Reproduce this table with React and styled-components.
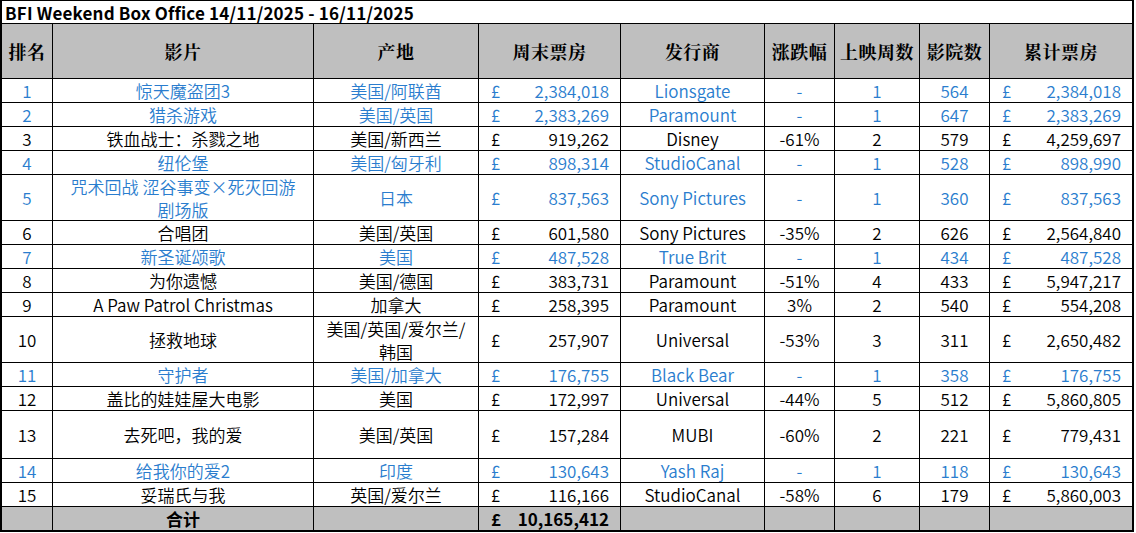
import React from "react";
import styled, { createGlobalStyle } from "styled-components";

const GlobalStyle = createGlobalStyle`
  html, body { margin: 0; padding: 0; background: #ffffff; }
  body { font-family: "Noto Sans CJK SC", "Noto Sans", sans-serif; }
`;

const COLS = "51px 261px 165px 142px 144px 70px 85px 70px 143px";
const BLUE = "#2A7DCE";
const GREY = "#BFBFBF";

const Sheet = styled.div`
  width: 1134px;
  box-sizing: border-box;
  border-top: 1px solid #000;
  border-left: 2px solid #000;
  border-right: 1px solid #000;
  border-bottom: 1px solid #000;
  font-family: "Noto Sans CJK SC", "Noto Sans", sans-serif;
`;

const TitleRow = styled.div`
  height: 23px;
  box-sizing: border-box;
  border-right: 1px solid #000;
  border-bottom: 1px solid #000;
  display: flex;
  align-items: center;
  padding-left: 3px;
  font-size: 17px;
  font-weight: 700;
  color: #000;
  white-space: nowrap;
  letter-spacing: 0.18px;
`;

const Row = styled.div`
  display: grid;
  grid-template-columns: ${COLS};
  height: ${(p) => p.$h}px;
  background: ${(p) => (p.$grey ? GREY : "#fff")};
  color: ${(p) => (p.$blue ? BLUE : "#000")};
`;

const Cell = styled.div`
  box-sizing: border-box;
  border-right: 1px solid #000;
  border-bottom: 1px solid #000;
  display: flex;
  align-items: center;
  justify-content: center;
  text-align: center;
  font-size: ${(p) => (p.$head ? 18 : 17)}px;
  font-weight: ${(p) => (p.$bold ? 700 : 350)};
  line-height: 23px;
  white-space: nowrap;
  overflow: hidden;
`;

const HeadCell = styled(Cell).attrs({ $head: true, $bold: true })`
  font-family: "Noto Serif CJK SC", "Noto Sans CJK SC", serif;
  letter-spacing: 0.5px;
`;

const MoneyCell = styled(Cell)`
  justify-content: space-between;
  padding: 0 11px 0 12px;
`;

const Pound = styled.span``;

const Amount = styled.span``;

const rows = [
  [1, "惊天魔盗团3", "美国/阿联酋", "2,384,018", "Lionsgate", "-", "1", "564", "2,384,018", true, 24],
  [2, "猎杀游戏", "美国/英国", "2,383,269", "Paramount", "-", "1", "647", "2,383,269", true, 24],
  [3, "铁血战士：杀戮之地", "美国/新西兰", "919,262", "Disney", "-61%", "2", "579", "4,259,697", false, 24],
  [4, "纽伦堡", "美国/匈牙利", "898,314", "StudioCanal", "-", "1", "528", "898,990", true, 24],
  [5, ["咒术回战 涩谷事变×死灭回游", "剧场版"], "日本", "837,563", "Sony Pictures", "-", "1", "360", "837,563", true, 46],
  [6, "合唱团", "美国/英国", "601,580", "Sony Pictures", "-35%", "2", "626", "2,564,840", false, 24],
  [7, "新圣诞颂歌", "美国", "487,528", "True Brit", "-", "1", "434", "487,528", true, 24],
  [8, "为你遗憾", "美国/德国", "383,731", "Paramount", "-51%", "4", "433", "5,947,217", false, 24],
  [9, "A Paw Patrol Christmas", "加拿大", "258,395", "Paramount", "3%", "2", "540", "554,208", false, 24],
  [10, "拯救地球", ["美国/英国/爱尔兰/", "韩国"], "257,907", "Universal", "-53%", "3", "311", "2,650,482", false, 46],
  [11, "守护者", "美国/加拿大", "176,755", "Black Bear", "-", "1", "358", "176,755", true, 24],
  [12, "盖比的娃娃屋大电影", "美国", "172,997", "Universal", "-44%", "5", "512", "5,860,805", false, 24],
  [13, "去死吧，我的爱", "美国/英国", "157,284", "MUBI", "-60%", "2", "221", "779,431", false, 48],
  [14, "给我你的爱2", "印度", "130,643", "Yash Raj", "-", "1", "118", "130,643", true, 24],
  [15, "妥瑞氏与我", "英国/爱尔兰", "116,166", "StudioCanal", "-58%", "6", "179", "5,860,003", false, 24],
];

const heads = ["排名", "影片", "产地", "周末票房", "发行商", "涨跌幅", "上映周数", "影院数", "累计票房"];

const Lines = ({ v }) =>
  Array.isArray(v) ? (
    <span>
      {v[0]}
      <br />
      {v[1]}
    </span>
  ) : (
    v
  );

export default function App() {
  return (
    <>
      <GlobalStyle />
      <Sheet>
        <TitleRow>BFI Weekend Box Office 14/11/2025 - 16/11/2025</TitleRow>
        <Row $h={55} $grey>
          {heads.map((h) => (
            <HeadCell key={h}>{h}</HeadCell>
          ))}
        </Row>
        {rows.map(([rank, film, origin, wk, dist, chg, weeks, sites, total, blue, h]) => (
          <Row key={rank} $h={h} $blue={blue}>
            <Cell>{rank}</Cell>
            <Cell>
              <Lines v={film} />
            </Cell>
            <Cell>
              <Lines v={origin} />
            </Cell>
            <MoneyCell>
              <Pound>£</Pound>
              <Amount>{wk}</Amount>
            </MoneyCell>
            <Cell>{dist}</Cell>
            <Cell>{chg}</Cell>
            <Cell>{weeks}</Cell>
            <Cell>{sites}</Cell>
            <MoneyCell>
              <Pound>£</Pound>
              <Amount>{total}</Amount>
            </MoneyCell>
          </Row>
        ))}
        <Row $h={24} $grey>
          <Cell />
          <Cell $bold>合计</Cell>
          <Cell />
          <MoneyCell $bold>
            <Pound>£</Pound>
            <Amount>10,165,412</Amount>
          </MoneyCell>
          <Cell />
          <Cell />
          <Cell />
          <Cell />
          <Cell />
        </Row>
      </Sheet>
    </>
  );
}
